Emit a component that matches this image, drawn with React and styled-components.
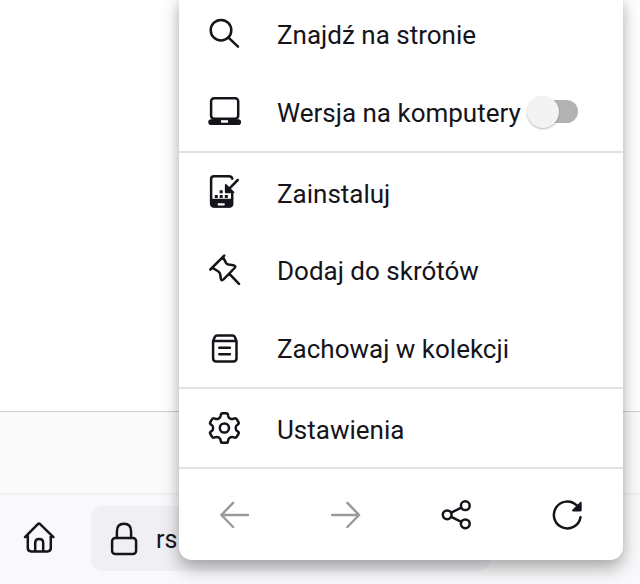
import React from "react";
import styled, { createGlobalStyle } from "styled-components";

const GlobalStyle = createGlobalStyle`
  *, *::before, *::after { box-sizing: border-box; }
  body { margin: 0; background: #fff; overflow: hidden; }
`;

const Screen = styled.div`
  position: relative;
  display: flex;
  flex-direction: column;
  width: 640px;
  height: 584px;
  overflow: hidden;
  background: #fff;
  color: #15141a;
  font-family: Roboto, "Liberation Sans", sans-serif;
`;

const PageBody = styled.main`
  flex: none;
  height: 411px;
`;

const PageFooter = styled.div`
  flex: none;
  height: 82px;
  border-top: 1px solid #cfcfd1;
  background: #fafafa;
`;

const Toolbar = styled.div`
  flex: 1;
  display: flex;
  align-items: flex-start;
  padding: 11px 0 0 21px;
  border-top: 2px solid #f0f0f3;
  background: #f9f9fb;
`;

const HomeButton = styled.div`
  display: flex;
  align-items: center;
  width: 70px;
  height: 62px;
`;

const AddressBar = styled.div`
  display: flex;
  align-items: center;
  width: 399px;
  height: 65px;
  padding-left: 15px;
  border-radius: 12px;
  background: #f0f0f4;
  font-size: 25px;
`;

const Address = styled.span`
  margin: 1px 0 0 14px;
`;

const Menu = styled.nav`
  position: absolute;
  left: 179px;
  bottom: 24px;
  width: 444px;
  border-radius: 0 0 13px 13px;
  background: #fff;
  box-shadow: 0 9px 18px rgba(0, 0, 0, 0.28), 0 2px 12px rgba(0, 0, 0, 0.08);
`;

const Group = styled.div`
  border-bottom: 2px solid #e2e2e4;
`;

const Row = styled.div`
  display: flex;
  align-items: center;
  height: 78px;
  padding-left: 27px;
`;

const Label = styled.span`
  margin: ${(p) => (p.$low ? 4 : 2)}px 0 0 35px;
  font-size: 26px;
  line-height: 32px;
  white-space: nowrap;
`;

const Switch = styled.div`
  display: flex;
  align-items: center;
  width: 48px;
  height: 23px;
  margin: 0 0 1px 9.5px;
  border-radius: 12px;
  background: #b2b2b2;
`;

const Thumb = styled.div`
  flex: none;
  width: 32px;
  height: 32px;
  margin-left: -3px;
  border-radius: 50%;
  background: #f3f3f3;
  box-shadow: 0 1px 2px rgba(0, 0, 0, 0.28);
`;

const Actions = styled.div`
  display: flex;
  height: 91px;
`;

const Action = styled.div`
  flex: 1;
  display: flex;
  align-items: center;
  justify-content: center;
  color: ${(p) => (p.$disabled ? "#9a9a9c" : "#15141a")};
`;

const Svg = styled.svg`
  flex: none;
  display: block;
  fill: none;
  stroke: currentColor;
  stroke-width: 2.5px;
  stroke-linecap: round;
  stroke-linejoin: round;

  .solid { fill: currentColor; stroke: none; }
  .gap { fill: #fff; stroke: none; }
`;

const Icon = ({ children }) => (
  <Svg width="36" height="36" viewBox="0 0 36 36">{children}</Svg>
);

const SearchIcon = () => (
  <Icon>
    <circle cx="15" cy="14.2" r="10.3" />
    <path d="M22.5 21.7 32 30.7" />
  </Icon>
);

const LaptopIcon = () => (
  <Icon>
    <rect x="5.1" y="4.2" width="27.1" height="20.6" rx="3" />
    <rect className="solid" x="2.3" y="25.2" width="32.7" height="5.8" rx="2.8" />
    <rect className="gap" x="15" y="26.2" width="7" height="2.5" />
  </Icon>
);

const InstallIcon = () => (
  <Icon>
    <path d="M26.3 4.6Q25.6 2.2 23 2.2H8Q5.1 2.2 5.1 5.2V29.6Q5.1 32.5 8 32.5H23.3Q26.2 32.5 26.2 29.6V20" />
    <path className="solid" d="M5 24.8H27V30Q27 33.4 23.5 33.4H8.2Q5 33.4 5 30Z" />
    <rect className="gap" x="11.7" y="29.2" width="7" height="2.2" rx=".6" />
    <path d="M31.8 6 22 15.8" />
    <path className="solid" d="M18.9 10.6Q19.4 9.4 20.4 10.3L28.1 17.8Q28.8 18.9 27.7 19.3H20Q18.9 19.3 18.9 18.3Z" />
    <path className="solid" d="M8.8 21h3v3h-3zM13.7 21h3v3h-3zM18.8 21h3v3h-3zM13.7 16.2h3v3h-3z" />
  </Icon>
);

const PinIcon = () => (
  <Icon>
    <path d="M4.4 17.5 18.2 3.6M17 5.2 20 10.8Q20.8 12.2 22.5 12.5L27.3 13.2Q30.3 13.9 28.6 16L17.5 27.4Q15.4 29.3 14.8 26.8L14.3 22.6Q14 20.6 12.4 19.5L6.4 15.8M23.4 21.8 33 31.8" />
  </Icon>
);

const CollectionIcon = () => (
  <Icon>
    <path d="M7.1 11V28.2Q7.1 31.4 10.3 31.4H27.3Q30.5 31.4 30.5 28.2V11L28.7 6.8Q28.1 5.4 26.5 5.4H11.1Q9.5 5.4 8.9 6.8ZM7.1 11H30.5M13.3 17.7H23.9M13.3 24.3H23.9" />
  </Icon>
);

const gearPath = () => {
  const shape = [[-13, 15.2], [13, 15.2], [19, 11.2], [41, 11.2]];
  const points = [];
  for (let tooth = 0; tooth < 6; tooth += 1) {
    shape.forEach(([angle, radius]) => {
      const a = ((angle + tooth * 60 - 90) * Math.PI) / 180;
      points.push([18.4 + 1.03 * radius * Math.cos(a), 18 + radius * Math.sin(a)]);
    });
  }
  const toward = (from, to, dist) => {
    const len = Math.hypot(to[0] - from[0], to[1] - from[1]);
    const t = Math.min(dist / len, 0.48);
    return `${(from[0] + (to[0] - from[0]) * t).toFixed(2)} ${(from[1] + (to[1] - from[1]) * t).toFixed(2)}`;
  };
  return `${points
    .map((p, i) => {
      const prev = points[(i + points.length - 1) % points.length];
      const next = points[(i + 1) % points.length];
      return `${i ? "L" : "M"}${toward(p, prev, 2)}Q${p[0].toFixed(2)} ${p[1].toFixed(2)} ${toward(p, next, 2)}`;
    })
    .join("")}Z`;
};

const GearIcon = () => (
  <Icon>
    <path d={gearPath()} />
    <circle cx="18.4" cy="18" r="4.6" />
  </Icon>
);

const HomeIcon = () => (
  <Icon>
    <path d="M4 18.2 16.6 5.3Q18 4 19.4 5.3L32.4 18.2M6.8 15.8V29Q6.8 32.4 10.2 32.4H26.4Q29.8 32.4 29.8 29V15.8M14.2 32.4V23.9Q14.2 20 18.2 20T22.2 23.9V32.4" />
  </Icon>
);

const LockIcon = () => (
  <Icon>
    <rect x="6.1" y="17" width="24" height="16" rx="3.2" />
    <path d="M10.9 17V10.4Q10.9 2.8 18 2.8T25.1 10.4V17" />
  </Icon>
);

const BackIcon = () => (
  <Icon><path d="M31 18H5M16.1 5.8 4.4 18 16.1 30" /></Icon>
);

const ForwardIcon = () => (
  <Icon><path d="M4.2 18H30.6M19.4 5.8 31.1 18 19.4 30" /></Icon>
);

const ShareIcon = () => (
  <Icon>
    <circle cx="8.2" cy="17.8" r="4.4" />
    <circle cx="26.3" cy="8.7" r="4.4" />
    <circle cx="26.3" cy="26.8" r="4.4" />
    <path d="M12.2 15.7 22.3 10.7M12.2 19.8 22.3 24.8" />
  </Icon>
);

const ReloadIcon = () => (
  <Icon>
    <path d="M30.5 20.2A13.4 13.4 0 1 1 26.7 8.4" />
    <path className="solid" d="M31.7 5.6V13Q31.7 14.4 30.4 14.4H22.9Q21.5 14 22.4 12.7L30.2 5Q31.5 4.3 31.7 5.6Z" />
  </Icon>
);

export default function App() {
  return (
    <>
      <GlobalStyle />
      <Screen>
        <PageBody />
        <PageFooter />
        <Toolbar>
          <HomeButton><HomeIcon /></HomeButton>
          <AddressBar>
            <LockIcon />
            <Address>rs</Address>
          </AddressBar>
        </Toolbar>
        <Menu>
          <Group>
            <Row><SearchIcon /><Label>Znajdź na stronie</Label></Row>
            <Row>
              <LaptopIcon />
              <Label>Wersja na komputery</Label>
              <Switch><Thumb /></Switch>
            </Row>
          </Group>
          <Group>
            <Row><InstallIcon /><Label $low>Zainstaluj</Label></Row>
            <Row><PinIcon /><Label>Dodaj do skrótów</Label></Row>
            <Row><CollectionIcon /><Label>Zachowaj w kolekcji</Label></Row>
          </Group>
          <Group>
            <Row><GearIcon /><Label $low>Ustawienia</Label></Row>
          </Group>
          <Actions>
            <Action $disabled><BackIcon /></Action>
            <Action $disabled><ForwardIcon /></Action>
            <Action><ShareIcon /></Action>
            <Action><ReloadIcon /></Action>
          </Actions>
        </Menu>
      </Screen>
    </>
  );
}
